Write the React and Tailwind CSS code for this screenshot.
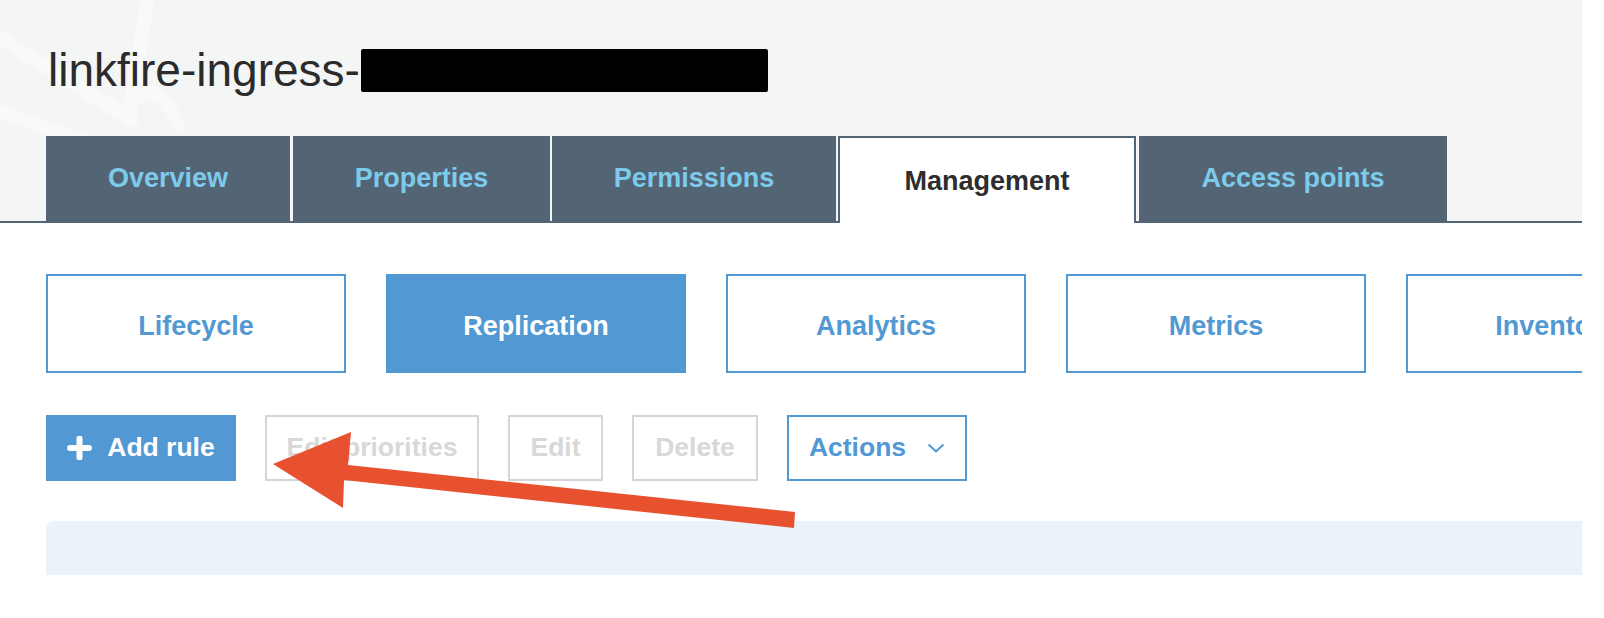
import React from "react";

const tabs = [
  { label: "Overview", w: "w-[244px]", ml: "" },
  { label: "Properties", w: "w-[257px]", ml: "ml-[3px]" },
  { label: "Permissions", w: "w-[284px]", ml: "ml-[2px]" },
  { label: "Management", w: "w-[298px]", ml: "ml-[2px]", active: true },
  { label: "Access points", w: "w-[308px]", ml: "ml-[3px]" },
];

const subTabs = ["Lifecycle", "Replication", "Analytics", "Metrics", "Inventory"];

function PlusIcon() {
  return (
    <svg width="25" height="24" viewBox="0 0 25 24" className="shrink-0">
      <path d="M12.5 2.5v19M3 12h19" stroke="#fff" strokeWidth="6" strokeLinecap="round" />
    </svg>
  );
}

function Chevron() {
  return (
    <svg width="18" height="10" viewBox="0 0 18 10" className="shrink-0">
      <path d="M1.5 1.5l7.5 7 7.5-7" fill="none" stroke="#5299d3" strokeWidth="2" />
    </svg>
  );
}

export default function App() {
  return (
    <div className="relative min-h-[618px] w-[1604px] bg-white font-['Liberation_Sans',Arial,sans-serif]">
      <div className="w-[1582px] overflow-hidden">
        {/* Header */}
        <div className="relative h-[221px] bg-[#f4f6f6]">
          <svg className="absolute left-0 top-0" width="200" height="221" viewBox="0 0 200 221">
            <g fill="none" stroke="#f8f9f9" strokeWidth="14" strokeLinecap="round">
              <path d="M-10 32 L132 120" />
              <path d="M-10 108 L95 145" />
              <path d="M148 -5 L129 118" />
              <path d="M143 97 C152 88 166 95 178 124" />
            </g>
          </svg>
          <div className="relative flex items-center pl-[48px] pt-[47px]">
            <span className="text-[46px] leading-[46px] text-[#2b2b2b]">linkfire-ingress-</span>
            <span className="ml-[1px] inline-block h-[43px] w-[407px] rounded-[2px] bg-black" />
          </div>
          <div className="relative mt-[43px] flex pl-[46px]">
            {tabs.map((t) =>
              t.active ? (
                <div
                  key={t.label}
                  className={`${t.w} ${t.ml} relative z-10 flex h-[87px] items-center justify-center border-x-2 border-t-2 border-[#536474] bg-white pt-[2px] text-[27px] font-bold text-[#2d2d2d]`}
                >
                  {t.label}
                </div>
              ) : (
                <div
                  key={t.label}
                  className={`${t.w} ${t.ml} flex h-[85px] items-center justify-center bg-[#536474] text-[27px] font-bold text-[#7ccbeb]`}
                >
                  {t.label}
                </div>
              )
            )}
          </div>
        </div>
        <div className="h-[2px] bg-[#536474]" />

        {/* Sub tabs */}
        <div className="mt-[51px] flex gap-[40px] pl-[46px]">
          {subTabs.map((s) => (
            <div
              key={s}
              className={`flex h-[99px] w-[300px] shrink-0 items-center justify-center border-2 border-[#5299d3] pt-[6px] text-[27px] font-bold ${
                s === "Replication" ? "bg-[#5299d3] text-white" : "bg-white text-[#5299d3]"
              }`}
            >
              {s}
            </div>
          ))}
        </div>

        {/* Buttons */}
        <div className="mt-[42px] flex gap-[29px] pl-[46px] text-[26.5px] font-bold">
          <button className="flex h-[66px] w-[190px] items-center justify-center gap-[15px] bg-[#5299d3] text-white">
            <PlusIcon />
            Add rule
          </button>
          <button className="flex h-[66px] w-[214px] items-center justify-center border-2 border-[#d6d6d6] text-[#d8d8d8]">
            Edit priorities
          </button>
          <button className="flex h-[66px] w-[95px] items-center justify-center border-2 border-[#d6d6d6] text-[#d8d8d8]">
            Edit
          </button>
          <button className="flex h-[66px] w-[126px] items-center justify-center border-2 border-[#d6d6d6] text-[#d8d8d8]">
            Delete
          </button>
          <button className="flex h-[66px] w-[180px] items-center justify-center gap-[21px] border-2 border-[#5299d3] text-[#5299d3]">
            Actions
            <Chevron />
          </button>
        </div>

        {/* Info box */}
        <div className="ml-[46px] mt-[40px] h-[54px] rounded-tl-lg bg-[#ebf3fa]" />
      </div>

      {/* Annotation arrow */}
      <svg className="pointer-events-none absolute left-0 top-0" width="1604" height="618" viewBox="0 0 1604 618">
        <polygon
          points="273,464 351,432 348,465 795,512 794,528 344,480 343,508"
          fill="#e8512f"
        />
      </svg>
    </div>
  );
}
